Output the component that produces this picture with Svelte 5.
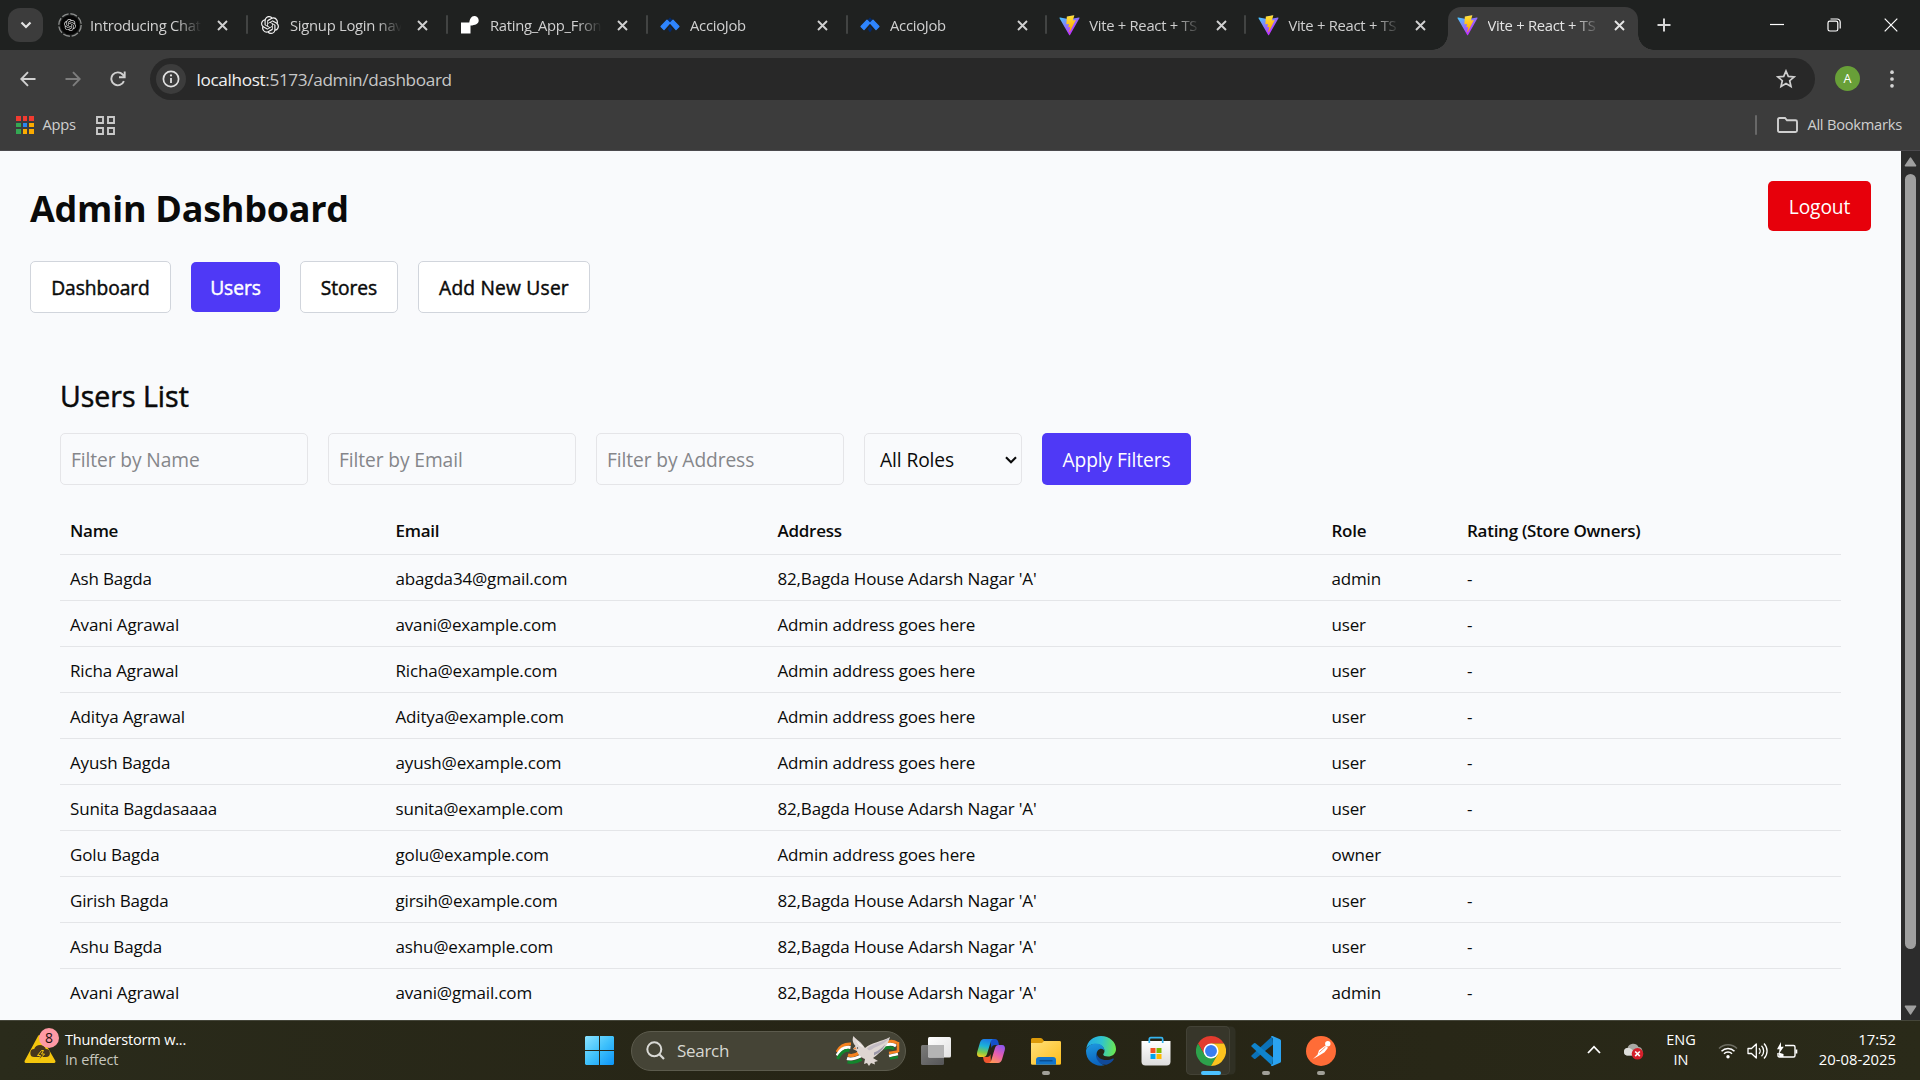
<script>
  const tabs = [
    { title: 'Introducing Chat', icon: 'gptRing' },
    { title: 'Signup Login nav', icon: 'gpt' },
    { title: 'Rating_App_Fron', icon: 'step' },
    { title: 'AccioJob', icon: 'accio' },
    { title: 'AccioJob', icon: 'accio' },
    { title: 'Vite + React + TS', icon: 'vite' },
    { title: 'Vite + React + TS', icon: 'vite' },
    { title: 'Vite + React + TS', icon: 'vite', active: true }
  ];

  const sections = ['Dashboard', 'Users', 'Stores', 'Add New User'];
  let section = $state('Users');

  const house = "82,Bagda House Adarsh Nagar 'A'";
  const adminAddress = 'Admin address goes here';
  const users = [
    { name: 'Ash Bagda', email: 'abagda34@gmail.com', address: house, role: 'admin', rating: '-' },
    { name: 'Avani Agrawal', email: 'avani@example.com', address: adminAddress, role: 'user', rating: '-' },
    { name: 'Richa Agrawal', email: 'Richa@example.com', address: adminAddress, role: 'user', rating: '-' },
    { name: 'Aditya Agrawal', email: 'Aditya@example.com', address: adminAddress, role: 'user', rating: '-' },
    { name: 'Ayush Bagda', email: 'ayush@example.com', address: adminAddress, role: 'user', rating: '-' },
    { name: 'Sunita Bagdasaaaa', email: 'sunita@example.com', address: house, role: 'user', rating: '-' },
    { name: 'Golu Bagda', email: 'golu@example.com', address: adminAddress, role: 'owner', rating: '' },
    { name: 'Girish Bagda', email: 'girsih@example.com', address: house, role: 'user', rating: '-' },
    { name: 'Ashu Bagda', email: 'ashu@example.com', address: house, role: 'user', rating: '-' },
    { name: 'Avani Agrawal', email: 'avani@gmail.com', address: house, role: 'admin', rating: '-' }
  ];

  const gptPath =
    'M22.2819 9.8211a5.9847 5.9847 0 0 0-.5157-4.9108 6.0462 6.0462 0 0 0-6.5098-2.9A6.0651 6.0651 0 0 0 4.9807 4.1818a5.9847 5.9847 0 0 0-3.9977 2.9 6.0462 6.0462 0 0 0 .7427 7.0966 5.98 5.98 0 0 0 .511 4.9107 6.051 6.051 0 0 0 6.5146 2.9001A5.9847 5.9847 0 0 0 13.2599 24a6.0557 6.0557 0 0 0 5.7718-4.2058 5.9894 5.9894 0 0 0 3.9977-2.9001 6.0557 6.0557 0 0 0-.7475-7.0729zm-9.022 12.6081a4.4755 4.4755 0 0 1-2.8764-1.0408l.1419-.0804 4.7783-2.7582a.7948.7948 0 0 0 .3927-.6813v-6.7369l2.02 1.1686a.071.071 0 0 1 .038.052v5.5826a4.504 4.504 0 0 1-4.4945 4.4944zm-9.6607-4.1254a4.4708 4.4708 0 0 1-.5346-3.0137l.142.0852 4.783 2.7582a.7712.7712 0 0 0 .7806 0l5.8428-3.3685v2.3324a.0804.0804 0 0 1-.0332.0615L9.74 19.9502a4.4992 4.4992 0 0 1-6.1408-1.6464zM2.3408 7.8956a4.485 4.485 0 0 1 2.3655-1.9728V11.6a.7664.7664 0 0 0 .3879.6765l5.8144 3.3543-2.0201 1.1685a.0757.0757 0 0 1-.071 0l-4.8303-2.7865A4.504 4.504 0 0 1 2.3408 7.872zm16.5963 3.8558L13.1038 8.364 15.1192 7.2a.0757.0757 0 0 1 .071 0l4.8303 2.7913a4.4944 4.4944 0 0 1-.6765 8.1042v-5.6772a.79.79 0 0 0-.407-.667zm2.0107-3.0231l-.142-.0852-4.7735-2.7818a.7759.7759 0 0 0-.7854 0L9.409 9.2297V6.8974a.0662.0662 0 0 1 .0284-.0615l4.8303-2.7866a4.4992 4.4992 0 0 1 6.6802 4.66zM8.3065 12.863l-2.02-1.1638a.0804.0804 0 0 1-.038-.0567V6.0742a4.4992 4.4992 0 0 1 7.3757-3.4537l-.142.0805L8.704 5.459a.7948.7948 0 0 0-.3927.6813zm1.0976-2.3654l2.602-1.4998 2.6069 1.4998v2.9994l-2.5974 1.4997-2.6067-1.4997Z';

  const appDots = ['#f23b30', '#f23b30', '#f23b30', '#34a853', '#2c87f0', '#fbab00', '#34a853', '#fbab00', '#fbab00'];
</script>

{#snippet favicon(kind)}
  {#if kind === 'gptRing'}
    <svg width="24" height="24" viewBox="0 0 24 24">
      <circle cx="12" cy="12" r="11.2" fill="none" stroke="#8b8d8c" stroke-width="1.4" stroke-dasharray="7 1.8" />
      <circle cx="12" cy="12" r="9.5" fill="#050505" />
      <g transform="translate(6 6) scale(.5)"><path d={gptPath} fill="#d0d0d0" /></g>
    </svg>
  {:else if kind === 'gpt'}
    <svg width="18" height="18" viewBox="0 0 24 24"><path d={gptPath} fill="#f2f2f2" /></svg>
  {:else if kind === 'step'}
    <svg width="20" height="20" viewBox="0 0 20 20">
      <path d="M1 7.5h8.3C9.8 4 11.200 1 14.300 1A4.400 4.400 0 0 1 18.700 5.400C18.700 9 15 10 10.500 10.500V18.500H1z" fill="#fff" />
    </svg>
  {:else if kind === 'accio'}
    <svg width="20" height="16" viewBox="0 0 20 16">
      <path d="M10 .5l3.500 3.500L10 7.500 6.500 4zM10 9l2.500 3L10 15.500 7.500 12z" fill="#052a68" />
      <path d="M7 3.200l2.800 3L4 12.500 1 9.500zM13 3.200l-2.800 3L16 12.500l3-3z" fill="#2f86ff" stroke="#2f86ff" stroke-width="1.200" stroke-linejoin="round" />
    </svg>
  {:else}
    <svg width="21" height="21" viewBox="0 0 410 404">
      <path fill="url(#viteBody)" d="M399.641 59.5246L215.643 388.545C211.844 395.338 202.084 395.378 198.228 388.618L10.5817 59.5563C6.38087 52.1896 12.6802 43.2665 21.0281 44.7586L205.223 77.6824C206.398 77.8924 207.601 77.8904 208.776 77.6763L389.119 44.8058C397.439 43.2894 403.768 52.1434 399.641 59.5246Z" />
      <path fill="url(#viteBolt)" d="M292.965 1.5744L156.801 28.2552C154.563 28.6937 152.906 30.5903 152.771 32.8664L144.395 174.33C144.198 177.662 147.258 180.248 150.51 179.498L188.42 170.749C191.967 169.931 195.172 173.055 194.443 176.622L183.18 231.775C182.422 235.487 185.907 238.661 189.532 237.56L212.947 230.446C216.577 229.344 220.065 232.527 219.297 236.242L201.398 322.875C200.278 328.294 207.486 331.249 210.492 326.603L212.5 323.5L323.454 102.072C325.312 98.3645 322.108 94.137 318.036 94.9228L279.014 102.454C275.347 103.161 272.227 99.746 273.262 96.1583L298.731 7.86689C299.767 4.27314 296.636 0.855181 292.965 1.5744Z" />
    </svg>
  {/if}
{/snippet}

<svg class="defs" width="0" height="0">
  <defs>
    <linearGradient id="viteBody" x1="6" y1="33" x2="235" y2="344" gradientUnits="userSpaceOnUse">
      <stop stop-color="#41D1FF" /><stop offset="1" stop-color="#BD34FE" />
    </linearGradient>
    <linearGradient id="viteBolt" x1="194.6" y1="8.8" x2="236" y2="293" gradientUnits="userSpaceOnUse">
      <stop stop-color="#FFEA83" /><stop offset=".083" stop-color="#FFDD35" /><stop offset="1" stop-color="#FFA800" />
    </linearGradient>
  </defs>
</svg>

<div class="screen">
  <div class="tabstrip">
    <button class="tab-search" aria-label="Search tabs">
      <svg width="12" height="8" viewBox="0 0 12 8"><path d="M1.500 1.500L6 6l4.500-4.500" fill="none" stroke="#e3e3e3" stroke-width="2.200" /></svg>
    </button>
    <div class="tabs">
      {#each tabs as tab, i}
        <div class="tab" class:active={tab.active} class:narrow={i > 3} class:divided={i < 6}>
          <span class="fav">{@render favicon(tab.icon)}</span>
          <span class="tab-title">{tab.title}</span>
          <svg class="tab-x" width="11" height="11" viewBox="0 0 11 11"><path d="M1 1l9 9M10 1l-9 9" stroke="currentColor" stroke-width="1.900" /></svg>
        </div>
      {/each}
    </div>
    <svg class="plus" width="14" height="14" viewBox="0 0 14 14"><path d="M7 .5v13M.5 7h13" stroke="#d6d6d6" stroke-width="2" /></svg>
    <div class="window-controls">
      <svg width="14" height="14" viewBox="0 0 14 14"><path d="M0 6.500h14" stroke="#fff" stroke-width="1.200" /></svg>
      <svg width="14" height="14" viewBox="0 0 14 14">
        <rect x="1" y="3.200" width="9.800" height="9.800" rx="1.800" fill="none" stroke="#fff" stroke-width="1.200" />
        <path d="M3.500 1h6.700a3 3 0 0 1 3 3v6.500" fill="none" stroke="#fff" stroke-width="1.200" />
      </svg>
      <svg width="14" height="14" viewBox="0 0 14 14"><path d="M.7.700l12.600 12.600M13.300.700L.7 13.300" stroke="#fff" stroke-width="1.200" /></svg>
    </div>
  </div>

  <div class="chrome-bars">
    <div class="toolbar">
      <div class="history">
        <svg width="16" height="16" viewBox="0 0 16 16"><path d="M15.500 8H1.500M8 1.200L1.300 8 8 14.800" fill="none" stroke="#d0d0d0" stroke-width="1.900" /></svg>
        <svg width="16" height="16" viewBox="0 0 16 16"><path d="M.5 8h14M8 1.200L14.700 8 8 14.800" fill="none" stroke="#7d7d7d" stroke-width="1.900" /></svg>
        <svg width="16" height="16" viewBox="0 0 16 16">
          <path d="M13.900 10.200A6.500 6.500 0 1 1 12.700 3.500L14.500 5.500" fill="none" stroke="#d0d0d0" stroke-width="1.900" />
          <path d="M14.700.5V6.200H9" fill="none" stroke="#d0d0d0" stroke-width="1.900" />
        </svg>
      </div>
      <div class="omnibox">
        <span class="site-info">
          <svg width="18" height="18" viewBox="0 0 18 18">
            <circle cx="9" cy="9" r="7.600" fill="none" stroke="#e0e0e0" stroke-width="1.700" />
            <path d="M9 8v5" stroke="#e0e0e0" stroke-width="1.800" /><circle cx="9" cy="5.400" r="1.100" fill="#e0e0e0" />
          </svg>
        </span>
        <span class="url"><b>localhost</b>:5173/admin/dashboard</span>
        <svg class="star" width="20" height="20" viewBox="0 0 20 20">
          <path d="M10 2l2.300 5.400 5.800.5-4.400 3.800 1.300 5.700-5-3-5 3 1.300-5.700L1.900 7.900l5.800-.5z" fill="none" stroke="#cfcfcf" stroke-width="1.700" />
        </svg>
      </div>
      <span class="avatar">A</span>
      <svg class="kebab" width="4" height="18" viewBox="0 0 4 18" fill="#d4d4d4"><circle cx="2" cy="2.200" r="1.850" /><circle cx="2" cy="9" r="1.850" /><circle cx="2" cy="15.800" r="1.850" /></svg>
    </div>
    <div class="bookmarks">
      <div class="app-dots">{#each appDots as color}<i style:background={color}></i>{/each}</div>
      <span class="bm-text">Apps</span>
      <svg class="tiles" width="19" height="19" viewBox="0 0 19 19" fill="none" stroke="#c9c9c9" stroke-width="1.900"><path d="M1 1h6v6H1zM12 1h6v6h-6zM1 12h6v6H1zM12 12h6v6h-6z" /></svg>
      <i class="bm-divider"></i>
      <svg class="folder" width="21" height="16" viewBox="0 0 21 16"><path d="M1 13.500V2.500Q1 1 2.500 1H8l2 2.300h8.500Q20 3.300 20 4.800v8.700q0 1.500-1.500 1.500h-16Q1 15 1 13.500z" fill="none" stroke="#d0d0d0" stroke-width="1.900" /></svg>
      <span class="bm-text all">All Bookmarks</span>
    </div>
  </div>

  <div class="viewport">
    <main class="page">
      <header class="page-head">
        <h1>Admin Dashboard</h1>
        <button class="logout">Logout</button>
      </header>
      <nav class="sections">
        {#each sections as name}
          <button class:current={section === name} onclick={() => (section = name)}>{name}</button>
        {/each}
      </nav>
      <section class="list">
        <h2>Users List</h2>
        <div class="filters">
          <input placeholder="Filter by Name" />
          <input placeholder="Filter by Email" />
          <input placeholder="Filter by Address" />
          <div class="select">
            <span>All Roles</span>
            <svg width="12" height="8" viewBox="0 0 12 8"><path d="M1 1.200l5 5 5-5" fill="none" stroke="#0a0a0a" stroke-width="2.100" /></svg>
          </div>
          <button class="apply">Apply Filters</button>
        </div>
        <table>
          <colgroup><col class="c-name" /><col class="c-email" /><col class="c-address" /><col class="c-role" /><col /></colgroup>
          <thead>
            <tr><th>Name</th><th>Email</th><th>Address</th><th>Role</th><th>Rating (Store Owners)</th></tr>
          </thead>
          <tbody>
            {#each users as user}
              <tr><td>{user.name}</td><td>{user.email}</td><td>{user.address}</td><td>{user.role}</td><td>{user.rating}</td></tr>
            {/each}
          </tbody>
        </table>
      </section>
    </main>
    <div class="scrollbar">
      <svg width="13" height="10" viewBox="0 0 13 10"><path d="M6.500 1.200L11.500 8.800H1.500z" fill="#9f9f9f" stroke="#9f9f9f" stroke-width="1.600" stroke-linejoin="round" /></svg>
      <div class="thumb"></div>
      <svg width="13" height="10" viewBox="0 0 13 10"><path d="M6.500 8.800L11.500 1.200H1.500z" fill="#9f9f9f" stroke="#9f9f9f" stroke-width="1.600" stroke-linejoin="round" /></svg>
    </div>
  </div>

  <footer class="taskbar">
    <div class="weather">
      <svg width="36" height="38" viewBox="0 0 36 38">
        <path d="M16.500 8.500L31 33.500H3z" fill="#f4c60d" stroke="#f4c60d" stroke-width="3" stroke-linejoin="round" />
        <path d="M11.500 29a4 4 0 0 1-.3-8 6.200 6.200 0 0 1 11.600 0 4 4 0 0 1 .2 8z" fill="#46351c" />
        <path d="M18.500 22.500l-4 5h3l-2 5 6-6.500h-3l2-3.500z" fill="#46351c" stroke="#f4c60d" stroke-width="1" />
        <circle cx="26" cy="10" r="10" fill="#ff99a4" />
        <text x="26" y="15" text-anchor="middle" class="badge">8</text>
      </svg>
      <div class="weather-text"><span>Thunderstorm w...</span><span class="dim">In effect</span></div>
    </div>

    <div class="dock">
      <svg class="start" width="29" height="29" viewBox="0 0 29 29">
        <defs><linearGradient id="win" x1="0" y1="0" x2="1" y2="1"><stop stop-color="#8be3ff" /><stop offset=".5" stop-color="#3fc1fb" /><stop offset="1" stop-color="#0c94f8" /></linearGradient></defs>
        <path d="M1 0h13v14H0V1zM15 0h13l1 1v13H15zM0 15h14v14H1l-1-1zM15 15h14v13l-1 1H15z" fill="url(#win)" />
      </svg>

      <div class="search">
        <svg class="lens" width="19" height="19" viewBox="0 0 19 19"><circle cx="8.300" cy="8.300" r="7" fill="none" stroke="#d9d9d5" stroke-width="2" /><path d="M13.300 13.300l4.700 4.700" stroke="#d9d9d5" stroke-width="2.200" /></svg>
        <span>Search</span>
        <svg class="dove" width="64" height="32" viewBox="0 0 64 32">
          <g fill="none" stroke-width="3">
            <path d="M1 17c3-6 7-8.500 14-8" stroke="#f58220" />
            <path d="M1 20.500c3-6 7-9 13.500-8" stroke="#fff" />
            <path d="M1.500 24c3-6 7-9.500 12-8.500" stroke="#12852c" />
            <path d="M12 20c4 1.500 8 0 12-3" stroke="#f58220" />
            <path d="M11 23.500c5 1.500 9 0 14-2.500" stroke="#fff" />
            <path d="M11.500 27c5 1 10 0 14-2.500" stroke="#12852c" />
            <path d="M50 7.500c4-2 8-1.500 11 .5" stroke="#f58220" />
            <path d="M49 10.500c5-2 8-1.500 11 .5" stroke="#fff" />
            <path d="M48 13.500c5-2 8-1 10 .5" stroke="#12852c" />
            <path d="M62 7v10M53 18l9-1.500" stroke="#f58220" stroke-width="2.500" />
            <path d="M53 21l9-2" stroke="#fff" stroke-width="2.500" />
            <path d="M54 23.500l8-1.500" stroke="#12852c" stroke-width="2.500" />
          </g>
          <path d="M17 14l2.500-3C16.500 8 16 4 17.500 1c3 4 8 6 11.500 12C36 7 45 7 54 2c-2 7-5 11-9 14.500-3 2.500-5 4.500-8 6.500l5 3-3.500 1 .5 2.500-4-1.500-2 3-2-3-3 1 1-5c-5-2-7.500-5.500-8-8z" fill="#ded6d2" />
          <path d="M31 13.500c6-5 14-5.500 22-10.500-2 4-8 7-13 9s-6 5.500-9 1.500z" fill="#c3bcc4" />
          <path d="M18.500 3c3 5 7 6 9.500 10l-5-2.500z" fill="#f3efec" />
          <path d="M38 17.500c5-2 8-4.500 11-8-1.500 4.500-5 8-11 11z" fill="#9a97a8" />
          <path d="M17 14l2.500-2 1 2.500z" fill="#f08a3c" /><circle cx="21.500" cy="13" r=".7" fill="#333" />
        </svg>
      </div>

      <div class="apps">
        <span class="app">
          <svg width="30" height="30" viewBox="0 0 30 30">
            <defs>
              <linearGradient id="tv1" x1="0" y1="0" x2="1" y2="1"><stop stop-color="#fff" /><stop offset="1" stop-color="#e2e2e2" /></linearGradient>
              <linearGradient id="tv2" x1="0" y1="0" x2="1" y2="1"><stop stop-color="#7b7b79" /><stop offset="1" stop-color="#555557" /></linearGradient>
            </defs>
            <rect x="0" y="9" width="23" height="20" rx="1.500" fill="url(#tv2)" />
            <rect x="7" y="1" width="23" height="20.500" rx="1.500" fill="url(#tv1)" />
            <path d="M7 9h16v12.500H8.500Q7 21.500 7 20z" fill="#b4b4b4" />
          </svg>
        </span>
        <span class="app">
          <svg width="30" height="30" viewBox="0 0 30 30">
            <defs>
              <linearGradient id="cp1" x1=".5" y1="0" x2=".3" y2="1"><stop stop-color="#1c7be8" /><stop offset=".4" stop-color="#1cb3d8" /><stop offset=".75" stop-color="#7ccb4a" /><stop offset="1" stop-color="#f5c922" /></linearGradient>
              <linearGradient id="cp2" x1=".8" y1="0" x2=".3" y2="1"><stop stop-color="#8c56f0" /><stop offset=".5" stop-color="#e75db0" /><stop offset="1" stop-color="#ff9656" /></linearGradient>
            </defs>
            <path d="M14 3h5c2 0 3 1.500 3.500 3.500L23 9h-4c-2 0-3 1-3.500 3z" fill="#1650c8" />
            <path d="M15 27h-4c-2 0-3-1.500-3.500-3.500L7 21h4c2 0 3-1 3.500-3z" fill="#f0562f" />
            <path d="M8 3h10c-2 0-3 1.500-3.500 3.500L11 18c-.6 2-1.800 3-3.500 3H4c-2.500 0-3.500-2-2.800-5L4 6.500C4.700 4.200 6 3 8 3z" fill="url(#cp1)" />
            <path d="M22 27H12c2 0 3-1.500 3.500-3.500L19 12c.6-2 1.800-3 3.500-3H26c2.500 0 3.500 2 2.800 5L26 23.500C25.300 25.800 24 27 22 27z" fill="url(#cp2)" />
          </svg>
        </span>
        <span class="app running">
          <svg width="30" height="30" viewBox="0 0 30 30">
            <defs><linearGradient id="fe" x1="0" y1="0" x2="1" y2="1"><stop stop-color="#ffe07a" /><stop offset="1" stop-color="#fcbd1c" /></linearGradient></defs>
            <path d="M0 3.500Q0 2 1.500 2h8q1 0 1.800.8L13 5H28.500q1.500 0 1.500 1.500V10H0z" fill="#dc9a0a" />
            <path d="M0 7h11l2-2h15.500Q30 5 30 6.500v21q0 1.300-1.500 1.300H1.500Q0 28.800 0 27.500z" fill="url(#fe)" />
            <path d="M5 28.800V24q0-3 3-3h14q3 0 3 3v4.800z" fill="#1275cb" />
            <path d="M8.500 24.700h13" stroke="#0b4f92" stroke-width="1.500" />
          </svg>
        </span>
        <span class="app">
          <svg width="30" height="30" viewBox="0 0 30 30">
            <defs>
              <linearGradient id="ed1" x1="0" y1=".4" x2="1" y2=".5"><stop stop-color="#23a9e6" /><stop offset=".5" stop-color="#2fc3cf" /><stop offset="1" stop-color="#6be84f" /></linearGradient>
              <linearGradient id="ed2" x1=".3" y1="0" x2=".5" y2="1"><stop stop-color="#1d96de" /><stop offset="1" stop-color="#0a62bd" /></linearGradient>
            </defs>
            <path d="M.2 13C1.200 5 7.500 0 15 0c8.500 0 15 6 15 13 0 5-4 7.500-8 7.500-3 0-4.800-1-4.800-2 0-.8 1.300-1.300 1.300-3.500C18.500 11 14.500 8 10 8 5 8 1.500 10 .2 13z" fill="url(#ed1)" />
            <path d="M.1 14C1.500 10 5.500 7.500 10 7.500c5 0 8.500 3.500 8.500 7.500-1-2-3-2.500-4.500-2-3 1-4 4-3 8 1.300 5 6 8.500 8 8.200C9 31.500 0 25 0 15z" fill="url(#ed2)" />
            <path d="M10.500 16.500c-2 6 3 12.800 10 12.300 3.500-1 6-3.300 7.300-5.600.3-.7-.3-1-1-.6C20 26 11 23.500 10.500 16.500z" fill="#114a9a" />
          </svg>
        </span>
        <span class="app">
          <svg width="30" height="30" viewBox="0 0 30 30">
            <defs><linearGradient id="st" x1="0" y1="0" x2="0" y2="1"><stop stop-color="#fff" /><stop offset="1" stop-color="#dcdcdc" /></linearGradient></defs>
            <path d="M.5 5h29v20.500q0 4-4 4h-21q-4 0-4-4z" fill="url(#st)" />
            <path d="M8.300 7V3.300Q8.300 1.700 9.800 1.700h10.400q1.500 0 1.500 1.600V7" fill="none" stroke="#35b5f0" stroke-width="1.700" />
            <path d="M9.500 12h5v5h-5z" fill="#f25022" /><path d="M15.500 12h5v5h-5z" fill="#7fba00" />
            <path d="M9.500 18h5v5h-5z" fill="#00a4ef" /><path d="M15.500 18h5v5h-5z" fill="#ffb900" />
          </svg>
        </span>
        <span class="app running focused">
          <svg width="30" height="30" viewBox="0 0 48 48">
            <path d="M3.215 12A24 24 0 0 1 44.785 12L24 12 13.608 30z" fill="#e33b2e" />
            <path d="M3.215 12A24 24 0 0 0 24 48L34.392 30 13.608 30z" fill="#2da14b" />
            <path d="M44.785 12A24 24 0 0 1 24 48L34.392 30 24 12z" fill="#fcc31e" />
            <circle cx="24" cy="24" r="12" fill="#fff" /><circle cx="24" cy="24" r="9.500" fill="#3a7df0" />
          </svg>
        </span>
        <span class="app running">
          <svg width="30" height="30" viewBox="0 0 30 30">
            <path d="M21.500 0l.5 8.500L4.500 22.800q-.8.600-1.500 0l-2.300-2q-.8-.8 0-1.600z" fill="#0b71b8" />
            <path d="M21.500 30l.5-8.500L4.500 7.200q-.8-.6-1.500 0L.7 9.200q-.8.800 0 1.600z" fill="#0f83cc" />
            <path d="M21.500 0L29 3.200q1 .5 1 1.600v20.400q0 1.100-1 1.600L21.500 30q-1 .2-1.500-.6l2-1.900V2.500L20 .6Q20.500-.2 21.500 0z" fill="#2ba3f1" />
          </svg>
        </span>
        <span class="app running">
          <svg width="30" height="30" viewBox="0 0 30 30">
            <circle cx="15" cy="15" r="15" fill="#ff6c37" />
            <circle cx="21.800" cy="7.800" r="2.700" fill="#fff" />
            <path d="M19.500 9.500l2.500 2.300-3.500 4.500-6.500 4-5 2.700 4.500-4.200 1.500-4.500z" fill="#fff" />
            <path d="M13.500 16.500l6-5.500" stroke="#ff6c37" stroke-width=".8" />
          </svg>
        </span>
      </div>
    </div>

    <div class="tray">
      <svg class="chev" width="14" height="9" viewBox="0 0 14 9"><path d="M1 8l6-6.300L13 8" fill="none" stroke="#fff" stroke-width="1.800" /></svg>
      <svg class="cloud" width="21" height="18" viewBox="0 0 21 18">
        <path d="M4 13.500a3.800 3.800 0 0 1 .5-7.500A6 6 0 0 1 15.500 5 4.500 4.500 0 0 1 17 13.500z" fill="#a9a9a4" />
        <path d="M4 13.500A3.800 3.800 0 0 1 4.500 6C8 5.500 10 8 13 13.500z" fill="#dededb" />
        <circle cx="14.500" cy="11.800" r="5.800" fill="#d5202b" />
        <path d="M12.200 9.500l4.600 4.600M16.800 9.500l-4.600 4.600" stroke="#fff" stroke-width="1.600" />
      </svg>
      <div class="lang"><span>ENG</span><span>IN</span></div>
      <svg class="wifi" width="20" height="16" viewBox="0 0 20 16" fill="none" stroke="#fff" stroke-width="1.500">
        <path d="M1 5.500a12.500 12.500 0 0 1 18 0" stroke="#6d6d62" />
        <path d="M3.500 8.200a9 9 0 0 1 13 0M6 10.800a5.600 5.600 0 0 1 8 0" /><circle cx="10" cy="13.700" r="1.700" fill="#fff" stroke="none" />
      </svg>
      <svg class="speaker" width="21" height="18" viewBox="0 0 21 18" fill="none" stroke="#fff" stroke-width="1.300" stroke-linejoin="round">
        <path d="M1 6.500h3.500L9.300 2v14L4.500 11.500H1z" /><path d="M12 6.200a4 4 0 0 1 0 5.600M14.500 3.800a7.300 7.300 0 0 1 0 10.400M17 1.500a10.700 10.700 0 0 1 0 15" />
      </svg>
      <svg class="battery" width="21" height="18" viewBox="0 0 21 18">
        <path d="M8 3.500h8.500Q18 3.500 18 5v8.500q0 1.500-1.500 1.500h-14Q1 15 1 13.500V11" fill="none" stroke="#fff" stroke-width="1.400" />
        <path d="M18.500 7.500h1.800v4h-1.800zM1.500 10.500l5 1.500v3h-4z" fill="#fff" />
        <path d="M4 0L0 7.200h2.500L1.800 12 6.800 4.800H4z" fill="#fff" />
      </svg>
      <div class="clock"><span>17:52</span><span>20-08-2025</span></div>
    </div>
  </footer>
</div>

<style>
  :global(body) { margin: 0; overflow: hidden; background: #1f2120; }
  .defs { position: absolute; }
  .screen {
    width: 1920px; height: 1080px; display: flex; flex-direction: column; overflow: hidden;
    font-family: 'Open Sans', 'Noto Sans', sans-serif; color: #0a0a0a;
  }
  svg { display: block; flex: none; }
  button, input { font: inherit; letter-spacing: inherit; margin: 0; box-sizing: border-box; }

  .tabstrip { height: 50px; flex: none; background: #1f2120; display: flex; align-items: center; padding-left: 8px; box-sizing: border-box; }
  .tab-search { width: 35px; height: 34px; border: 0; border-radius: 12px; background: #3c3c3c; display: grid; place-items: center; padding: 0; flex: none; }
  .tabs { display: flex; margin-left: 3.500px; height: 50px; }
  .tab { width: 200px; height: 50px; display: flex; align-items: center; box-sizing: border-box; padding-left: 11.500px; color: #d0d0d0; position: relative; }
  .tab.narrow { width: 199.200px; }
  .tab.divided::after { content: ''; position: absolute; right: -1.500px; top: 15px; width: 2.500px; height: 19px; border-radius: 1px; background: #424443; }
  .tab.active { color: #e4e4e4; }
  .tab.active::before {
    content: ''; position: absolute; left: 4px; top: 7px; width: 190px; height: 43px; z-index: 0;
    border-radius: 13px 13px 0 0; background: #3c3c3c;
  }
  .tab.active::after {
    content: ''; position: absolute; left: -12px; bottom: 0; width: 222px; height: 16px;
    background:
      radial-gradient(circle at 0 0, transparent 15.500px, #3c3c3c 16px) left / 16px 16px no-repeat,
      radial-gradient(circle at 100% 0, transparent 15.500px, #3c3c3c 16px) right / 16px 16px no-repeat;
  }
  .tab > * { z-index: 1; }
  .fav { width: 24px; display: grid; place-items: center; flex: none; }
  .tab-title {
    width: 114px; margin-left: 8px; font-size: 14.800px; letter-spacing: -0.280px; white-space: nowrap; overflow: hidden; flex: none; line-height: 24px;
    mask-image: linear-gradient(90deg, #000 76%, transparent 98%);
  }
  .tab-x { margin-left: 12.500px; }
  .plus { margin-left: 14px; }
  .window-controls { margin-left: auto; display: flex; gap: 43px; padding-right: 22px; }

  .chrome-bars { flex: none; height: 101px; background: #3c3c3c; border-bottom: 1px solid #4b494d; box-sizing: border-box; }
  .toolbar { height: 58px; display: flex; align-items: center; padding-left: 20px; }
  .history { display: flex; gap: 29px; width: 130px; flex: none; }
  .omnibox { width: 1665px; height: 42px; border-radius: 21px; background: #282828; display: flex; align-items: center; box-sizing: border-box; padding: 0 19px 0 6px; }
  .site-info { width: 30px; height: 30px; border-radius: 50%; background: #3c3c3c; display: grid; place-items: center; }
  .url { margin-left: 10.500px; font-size: 17.200px; letter-spacing: -0.360px; color: #c7c7c7; }
  .url b { font-weight: 400; color: #f1f1f1; }
  .star { margin-left: auto; }
  .avatar { margin-left: 20px; width: 25px; height: 25px; border-radius: 50%; background: #689f38; color: #fff; font-size: 12.500px; display: grid; place-items: center; margin-top: -1px; }
  .kebab { margin: -1px 0 0 30px; }
  .bookmarks { height: 34px; display: flex; align-items: center; padding: 0 18px 0 16px; }
  .app-dots { display: grid; grid-template-columns: repeat(3, 4.500px); grid-auto-rows: 4.500px; gap: 2px; }
  .bm-text { font-size: 14.700px; color: #cfcfcf; margin: -2px 0 0 9px; letter-spacing: -0.250px; }
  .tiles { margin-left: 20px; }
  .bm-divider { margin-left: auto; width: 2px; height: 20px; background: #686868; border-radius: 1px; }
  .folder { margin-left: 20px; }

  .viewport { height: 869px; flex: none; display: flex; background: #f9fafc; }
  .page { flex: 1; height: 869px; overflow: hidden; padding: 30px; box-sizing: border-box; }
  .page-head { display: flex; justify-content: space-between; align-items: center; height: 50px; }
  h1 { margin: 5px 0 0; font-size: 36px; font-weight: 700; letter-spacing: -0.270px; line-height: 45px; }
  .logout { width: 103px; height: 50px; border: 0; border-radius: 5px; background: #e7000b; color: #fff; font-size: 19.200px; letter-spacing: -0.100px; padding: 1px 0 0; }
  .sections { display: grid; grid-template-columns: 141px 89px 98px 172px; align-items: center; gap: 20px; margin-top: 30px; height: 52px; }
  .sections button {
    height: 52px; padding: 1px 0 0; border: 1px solid #d1d5dc; border-radius: 5px; background: #fff; color: #0a0a0a;
    font-size: 19.200px; letter-spacing: -0.050px; white-space: nowrap; -webkit-text-stroke: 0.450px currentColor;
  }
  .sections button:last-child { letter-spacing: 0.200px; }
  .sections .current { height: 50px; border: 0; background: #4f39f6; color: #fff; }
  .list { padding: 65px 30px 0; }
  h2 { margin: 0 0 19px; font-size: 28.500px; font-weight: 400; line-height: 36px; -webkit-text-stroke: 0.500px currentColor; }
  .filters { display: flex; gap: 20px; height: 52px; font-size: 19.200px; letter-spacing: -0.100px; }
  .filters input { width: 248px; height: 52px; border: 1px solid #e5e5e8; border-radius: 5px; background: transparent; padding: 1px 10px 0; outline: 0; }
  .filters input::placeholder { color: #85868a; opacity: 1; }
  .select { width: 158px; height: 52px; box-sizing: border-box; border: 1px solid #e5e5e8; border-radius: 5px; padding: 1px 4px 0 15px; display: flex; align-items: center; justify-content: space-between; }
  .apply { width: 149px; height: 52px; border: 0; border-radius: 5px; background: #4f39f6; color: #fff; padding: 1px 0 0; }
  table { width: 1781px; table-layout: fixed; border-collapse: collapse; margin-top: 20px; font-size: 17px; letter-spacing: -0.160px; }
  .c-name { width: 325.500px; }
  .c-email { width: 382px; }
  .c-address { width: 554px; }
  .c-role { width: 135.500px; }
  th, td { text-align: left; padding: 2px 10px 0; border-bottom: 1px solid #e4e5e8; height: 43px; line-height: 25px; white-space: nowrap; }
  th { font-weight: 600; height: 47px; letter-spacing: -0.270px; }
  tbody tr:last-child td { border-bottom: 0; }
  .scrollbar { width: 19px; background: #2c2c2c; display: flex; flex-direction: column; align-items: center; padding: 6px 0 5px; box-sizing: border-box; }
  .thumb { width: 11px; height: 775px; margin: 7px 0 auto; border-radius: 6px; background: #9f9f9f; }

  .taskbar {
    height: 60px; flex: none; box-sizing: border-box; border-top: 1px solid #45463a; background: linear-gradient(90deg, #2a2b1b, #262415 50%, #2a2a19);
    display: grid; grid-template-columns: 585px 1fr auto; align-items: center; color: #fff; font-size: 14.500px;
  }
  .weather { display: flex; align-items: center; padding-left: 23px; }
  .weather > svg { margin-top: -7px; }
  .badge { font-size: 14px; fill: #1c1010; }
  .weather-text { margin: -2px 0 0 6px; display: flex; flex-direction: column; line-height: 20px; letter-spacing: -0.180px; }
  .dim { color: #c6c6bd; }
  .dock { display: flex; align-items: center; }
  .search { margin-left: 17px; width: 275px; height: 40px; border-radius: 20px; background: #454436; border: 1px solid #5c5b4d; box-sizing: border-box; display: flex; align-items: center; padding: 0 5px 0 14px; color: #d8d8d2; font-size: 17px; letter-spacing: -0.300px; }
  .search span { margin-left: 12px; }
  .dove { margin-left: auto; }
  .apps { display: flex; margin-left: 2.500px; }
  .app { width: 55px; height: 49px; display: grid; place-items: center; position: relative; }
  .app > svg { z-index: 1; }
  .running::after { content: ''; position: absolute; left: 23.500px; bottom: 0; width: 8px; height: 4px; border-radius: 2px; background: #a1a098; }
  .focused::before { content: ''; position: absolute; left: 2px; top: 0; width: 44px; height: 49px; border-radius: 5px; background: #37362a; box-shadow: inset 0 0 0 1px #434236, 6px 0 0 -0.500px #303024; }
  .focused::after { left: 17.500px; width: 20px; background: #4cc2ff; }
  .tray { display: flex; align-items: center; padding-right: 24px; }
  .chev { margin-top: -2px; }
  .lang, .clock { display: flex; flex-direction: column; line-height: 20px; margin-top: -1px; }
  .lang { align-items: center; width: 32px; margin-left: 21px; }
  .cloud { margin-left: 22px; }
  .wifi { margin-left: 21px; }
  .speaker { margin-left: 9px; }
  .battery { margin-left: 9px; }
  .clock { align-items: flex-end; width: 98px; margin-top: -3px; font-size: 14.800px; }
</style>
